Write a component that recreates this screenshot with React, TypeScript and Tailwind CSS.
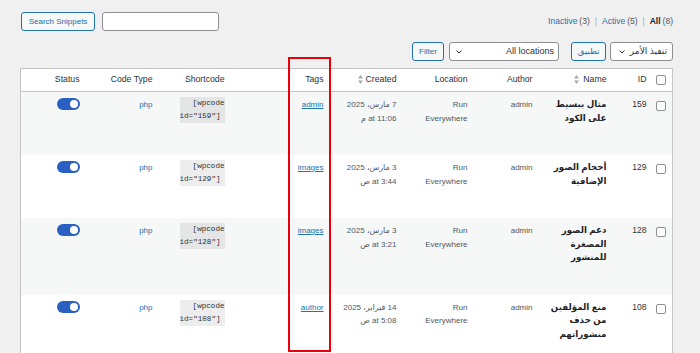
import React from "react";

type Row = {
  id: string;
  name: string[];
  created: string[];
  tag: string;
};

const rows: Row[] = [
  { id: "159", name: ["مثال ببسيط", "على الكود"], created: ["7 مارس، 2025", "at 11:06 م"], tag: "admin" },
  { id: "129", name: ["أحجام الصور", "الإضافية"], created: ["3 مارس، 2025", "at 3:44 ص"], tag: "images" },
  { id: "128", name: ["دعم الصور", "المصغرة", "للمنشور"], created: ["3 مارس، 2025", "at 3:21 ص"], tag: "images" },
  { id: "108", name: ["منع المؤلفين", "من حذف", "منشوراتهم"], created: ["14 فبراير، 2025", "at 5:08 ص"], tag: "author" },
];

function SortIcon() {
  return (
    <svg width="5" height="9" viewBox="0 0 5 9" className="block shrink-0">
      <path d="M2.5 0 L5 3.5 L0 3.5 Z" fill="#a7aaad" />
      <path d="M2.5 9 L5 5.5 L0 5.5 Z" fill="#a7aaad" />
    </svg>
  );
}

function Chevron() {
  return (
    <svg width="6" height="4" viewBox="0 0 6 4" className="block shrink-0">
      <path d="M0.5 0.5 L3 3 L5.5 0.5" fill="none" stroke="#2c3338" strokeWidth="1" />
    </svg>
  );
}

function Checkbox({ className = "" }: { className?: string }) {
  return <div className={"h-[10px] w-[10px] rounded-[2px] border border-[#8c8f94] bg-white " + className} />;
}

function Toggle() {
  return (
    <div dir="ltr" className="flex h-[12px] w-[23px] items-center justify-end rounded-full bg-[#2a60c2] pr-[2px]">
      <div className="h-[8px] w-[8px] rounded-full bg-white" />
    </div>
  );
}

export default function App() {
  return (
    <div
      dir="rtl"
      className="relative h-[353px] w-[700px] overflow-hidden bg-[#f0f0f1] pl-[21px] pr-[27px] pt-[12px] font-['Liberation_Sans','DejaVu_Sans',sans-serif] text-[#2c3338]"
    >
      {/* Row 1 */}
      <div className="flex h-[19px] items-center justify-between">
        <div dir="ltr" className="flex items-center text-[8.5px] text-[#50575e]">
          <span className="text-[#2271b1]">Inactive</span>
          <span className="ml-[2px]">(3)</span>
          <span className="mx-[5px] text-[#a7aaad]">|</span>
          <span className="text-[#2271b1]">Active</span>
          <span className="ml-[2px]">(5)</span>
          <span className="mx-[5px] text-[#a7aaad]">|</span>
          <span className="font-bold text-[#1d2327]">All</span>
          <span className="ml-[2px]">(8)</span>
        </div>
        <div className="flex items-center gap-[7px]">
          <div className="h-[19px] w-[117px] rounded-[3px] border border-[#8c8f94] bg-white" />
          <div className="flex h-[19px] w-[74px] items-center justify-center rounded-[3px] border border-[#2271b1] bg-[#f6f7f7] text-[8px] text-[#2271b1]">
            Search Snippets
          </div>
        </div>
      </div>

      {/* Row 2 */}
      <div className="mt-[11px] flex h-[19px] items-center">
        <div className="flex h-[19px] w-[63px] items-center justify-between rounded-[3px] border border-[#8c8f94] bg-white pl-[8px] pr-[5px] text-[9px] text-[#2c3338]">
          <span>تنفيذ الأمر</span>
          <Chevron />
        </div>
        <div className="mr-[4px] flex h-[19px] w-[35px] items-center justify-center rounded-[3px] border border-[#2271b1] bg-[#f6f7f7] text-[8.5px] text-[#2271b1]">
          تطبيق
        </div>
        <div className="mr-[12px] flex h-[19px] w-[110px] items-center justify-between rounded-[3px] border border-[#8c8f94] bg-white pl-[6px] pr-[4px] text-[9px] text-[#2c3338]">
          <span>All locations</span>
          <Chevron />
        </div>
        <div className="mr-[5px] flex h-[19px] w-[32px] items-center justify-center rounded-[3px] border border-[#2271b1] bg-[#f6f7f7] text-[8px] text-[#2271b1]">
          Filter
        </div>
      </div>

      {/* Table */}
      <table className="mt-[7px] w-full table-fixed border-collapse border border-[#c3c4c7] bg-white">
        <colgroup>
          <col className="w-[20px]" />
          <col className="w-[40px]" />
          <col className="w-[74px]" />
          <col className="w-[65px]" />
          <col className="w-[71px]" />
          <col className="w-[73px]" />
          <col className="w-[99px]" />
          <col className="w-[72px]" />
          <col className="w-[73px]" />
          <col className="w-[65px]" />
        </colgroup>
        <thead>
          <tr className="h-[23px] border-b border-[#c3c4c7] text-[8.7px] font-normal text-[#2c3338]">
            <th className="pr-[6px] align-middle font-normal">
              <Checkbox />
            </th>
            <th className="pr-[6px] text-right font-normal">ID</th>
            <th className="pr-[6px] font-normal">
              <div className="flex items-center gap-[4px]">
                <span>Name</span>
                <SortIcon />
              </div>
            </th>
            <th className="pr-[6px] text-right font-normal">Author</th>
            <th className="pr-[6px] text-right font-normal">Location</th>
            <th className="pr-[6px] font-normal">
              <div className="flex items-center gap-[3px]">
                <span>Created</span>
                <SortIcon />
              </div>
            </th>
            <th className="pr-[6px] text-right font-normal">Tags</th>
            <th className="pr-[6px] text-right font-normal">Shortcode</th>
            <th className="pr-[6px] text-right font-normal">Code Type</th>
            <th className="pr-[6px] text-right font-normal">Status</th>
          </tr>
        </thead>
        <tbody>
          {rows.map((r, i) => (
            <tr key={r.id} className={i % 2 === 0 ? "bg-[#f6f7f7]" : "bg-white"}>
              <td className="pr-[6px] pt-[6px] align-top">
                <Checkbox className="mt-[3px]" />
              </td>
              <td className="pr-[6px] pt-[6px] align-top text-[8.5px] leading-[13.5px] text-[#2c3338]">{r.id}</td>
              <td className="pb-[30px] pr-[6px] pt-[6px] align-top">
                <div className="text-[8.7px] font-bold leading-[13.5px] text-[#1d2327]">
                  {r.name.map((n) => (
                    <div key={n}>{n}</div>
                  ))}
                </div>
              </td>
              <td className="pr-[6px] pt-[6px] align-top text-[8px] leading-[13.5px] text-[#50575e]">admin</td>
              <td className="pr-[6px] pt-[6px] align-top text-[8px] leading-[13.5px] text-[#50575e]">
                <div>Run</div>
                <div>Everywhere</div>
              </td>
              <td className="pr-[6px] pt-[6px] align-top text-[8px] leading-[13.5px] text-[#50575e]">
                {r.created.map((c) => (
                  <div key={c}>{c}</div>
                ))}
              </td>
              <td className="pr-[6px] pt-[6px] align-top text-[8px] leading-[13.5px]">
                <span className="text-[#2271b1] underline">{r.tag}</span>
              </td>
              <td className="pr-[6px] pt-[5px] align-top">
                <div dir="ltr" className="w-[45px] bg-[rgba(0,0,0,0.07)] font-['Liberation_Mono',monospace] text-[7.6px] leading-[13px] text-[#2c3338]">
                  <div className="text-right">[wpcode</div>
                  <div>id="{r.id}"]</div>
                </div>
              </td>
              <td className="pr-[6px] pt-[6px] align-top text-[8px] leading-[13.5px] text-[#2271b1]">php</td>
              <td className="pr-[6px] pt-[6px] align-top">
                <Toggle />
              </td>
            </tr>
          ))}
        </tbody>
      </table>

      {/* Annotation overlay */}
      <div className="pointer-events-none absolute left-[288px] top-[57px] h-[295px] w-[43px] border-2 border-[#e8000b]" />
    </div>
  );
}
